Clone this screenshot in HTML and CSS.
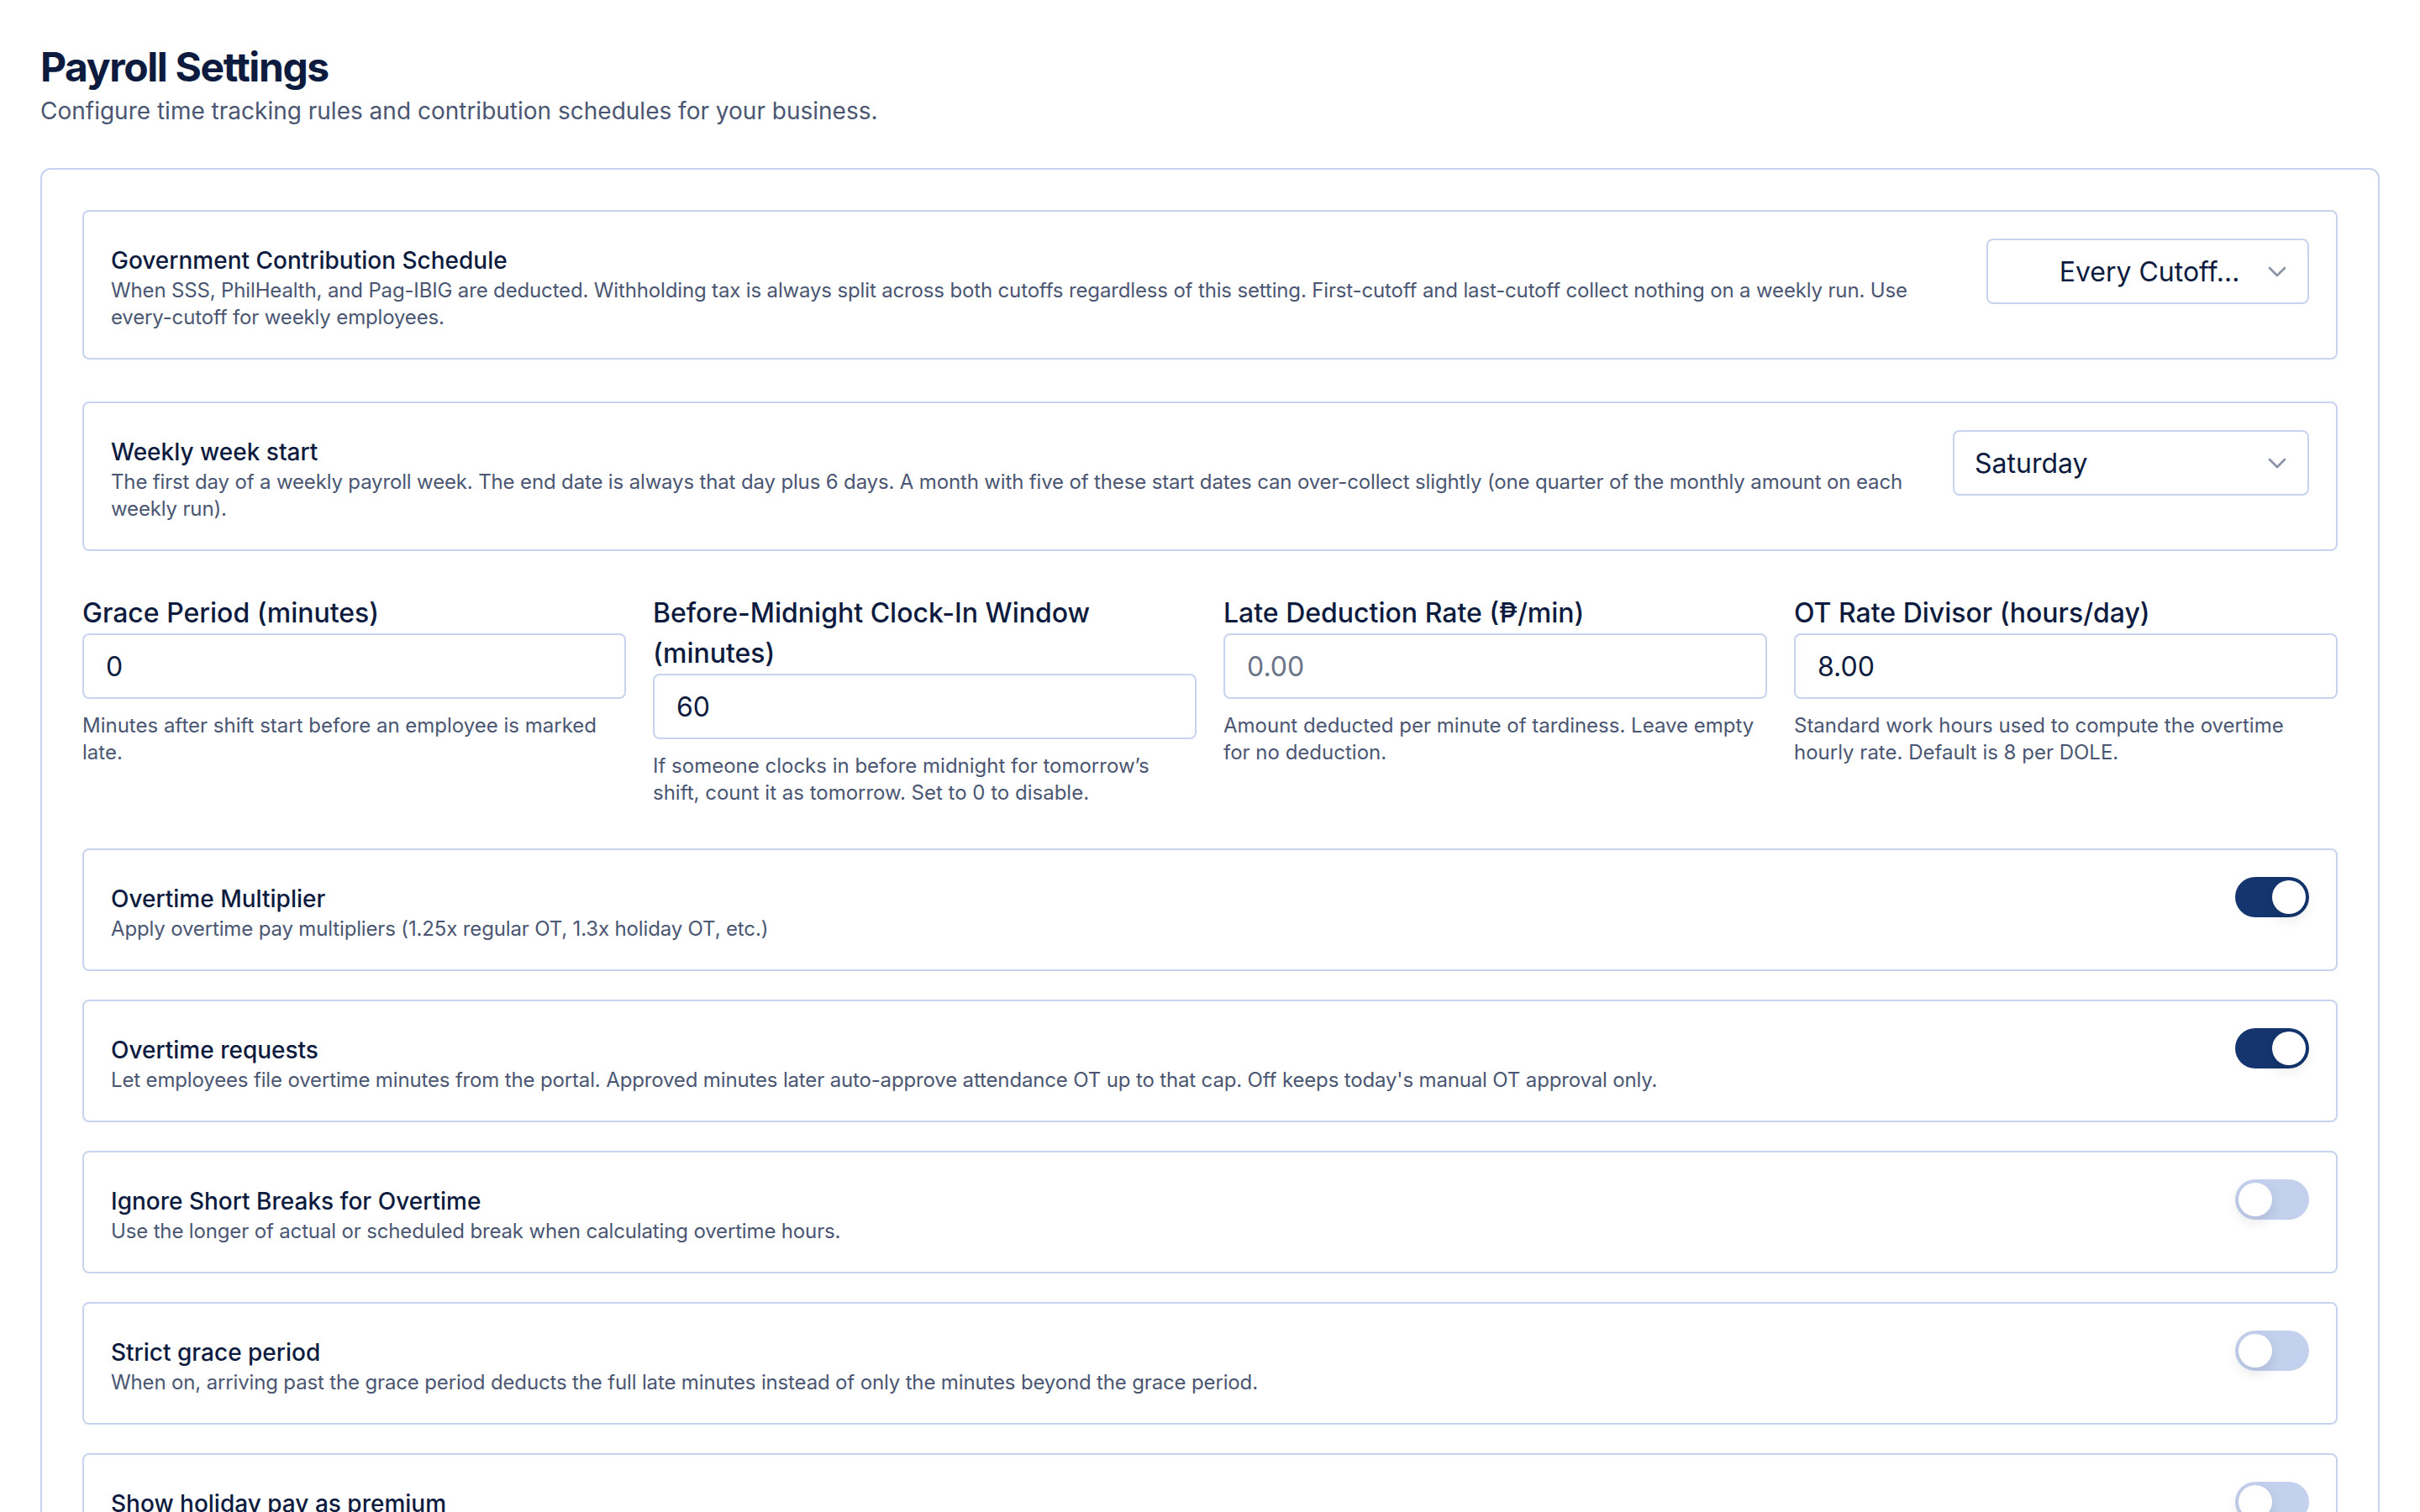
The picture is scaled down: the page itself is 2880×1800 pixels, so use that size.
FILE: index.html
```html
<!DOCTYPE html>
<html lang="en">
<head>
  <meta charset="UTF-8">
  <meta name="viewport" content="width=device-width, initial-scale=1.0">
  <title>Payroll Settings</title>
  <link rel="stylesheet" href="styles.css">
</head>
<body>

  <div class="page">
    <div class="page-head">
      <h1>Payroll Settings</h1>
      <p>Configure time tracking rules and contribution schedules for your business.</p>
    </div>

    <div class="panel">

      <div class="row-card">
        <div class="row-text">
          <h3>Government Contribution Schedule</h3>
          <p>When SSS, PhilHealth, and Pag-IBIG are deducted. Withholding tax is always split across both cutoffs regardless of this setting. First-cutoff and last-cutoff collect nothing on a weekly run. Use every-cutoff for weekly employees.</p>
        </div>
        <div class="select select-cutoff">
          <span class="select-value centered">Every Cutoff…</span>
          <svg class="chevron" viewBox="0 0 16 16" fill="none" stroke="currentColor" stroke-width="1.3" stroke-linecap="round" stroke-linejoin="round"><path d="M3.5 6l4.5 4.5L12.5 6"/></svg>
        </div>
      </div>

      <div class="row-card">
        <div class="row-text">
          <h3>Weekly week start</h3>
          <p>The first day of a weekly payroll week. The end date is always that day plus 6 days. A month with five of these start dates can over-collect slightly (one quarter of the monthly amount on each weekly run).</p>
        </div>
        <div class="select select-day">
          <span class="select-value">Saturday</span>
          <svg class="chevron" viewBox="0 0 16 16" fill="none" stroke="currentColor" stroke-width="1.3" stroke-linecap="round" stroke-linejoin="round"><path d="M3.5 6l4.5 4.5L12.5 6"/></svg>
        </div>
      </div>

      <div class="fields">
        <div class="field">
          <label>Grace Period (minutes)</label>
          <input type="text" value="0">
          <p class="help">Minutes after shift start before an employee is marked late.</p>
        </div>
        <div class="field">
          <label>Before-Midnight Clock-In Window (minutes)</label>
          <input type="text" value="60">
          <p class="help">If someone clocks in before midnight for tomorrow’s shift, count it as tomorrow. Set to 0 to disable.</p>
        </div>
        <div class="field">
          <label>Late Deduction Rate (₱/min)</label>
          <input type="text" placeholder="0.00">
          <p class="help">Amount deducted per minute of tardiness. Leave empty for no deduction.</p>
        </div>
        <div class="field">
          <label>OT Rate Divisor (hours/day)</label>
          <input type="text" value="8.00">
          <p class="help">Standard work hours used to compute the overtime hourly rate. Default is 8 per DOLE.</p>
        </div>
      </div>

      <div class="toggle-list">
        <div class="row-card">
          <div class="row-text">
            <h3>Overtime Multiplier</h3>
            <p>Apply overtime pay multipliers (1.25x regular OT, 1.3x holiday OT, etc.)</p>
          </div>
          <span class="toggle on"><span class="thumb"></span></span>
        </div>

        <div class="row-card">
          <div class="row-text">
            <h3>Overtime requests</h3>
            <p>Let employees file overtime minutes from the portal. Approved minutes later auto-approve attendance OT up to that cap. Off keeps today's manual OT approval only.</p>
          </div>
          <span class="toggle on"><span class="thumb"></span></span>
        </div>

        <div class="row-card">
          <div class="row-text">
            <h3>Ignore Short Breaks for Overtime</h3>
            <p>Use the longer of actual or scheduled break when calculating overtime hours.</p>
          </div>
          <span class="toggle"><span class="thumb"></span></span>
        </div>

        <div class="row-card">
          <div class="row-text">
            <h3>Strict grace period</h3>
            <p>When on, arriving past the grace period deducts the full late minutes instead of only the minutes beyond the grace period.</p>
          </div>
          <span class="toggle"><span class="thumb"></span></span>
        </div>

        <div class="row-card">
          <div class="row-text">
            <h3>Show holiday pay as premium</h3>
            <p>Show only the extra holiday amount on payslips instead of the full holiday day rate.</p>
          </div>
          <span class="toggle"><span class="thumb"></span></span>
        </div>
      </div>

    </div>
  </div>

</body>
</html>
```

FILE: styles.css
```css
* {
  margin: 0;
  padding: 0;
  box-sizing: border-box;
}

body {
  font-family: Inter, "Noto Sans", sans-serif;
  background: #fff;
  color: #0d1b3e;
}

.page {
  padding: 48px;
}

/* header */
.page-head h1 {
  font-size: 48px;
  line-height: 64px;
  font-weight: 700;
  letter-spacing: -1.4px;
  color: #0d1b3e;
}

.page-head p {
  font-size: 28px;
  line-height: 40px;
  color: #4a5672;
}

.panel {
  margin-top: 48px;
  border: 2px solid #c7d4ef;
  border-radius: 12px;
  padding: 48px;
  display: flex;
  flex-direction: column;
  gap: 50px;
}

/* setting rows */
.row-card {
  display: flex;
  align-items: flex-start;
  gap: 32px;
  border: 2px solid #c7d4ef;
  border-radius: 8px;
  padding: 32px;
}

.row-text {
  flex: 1;
  min-width: 0;
  padding-top: 6px;
}

.row-text h3 {
  font-size: 28px;
  line-height: 40px;
  font-weight: 500;
  color: #0d1b3e;
}

.row-text p {
  font-size: 24px;
  line-height: 32px;
  letter-spacing: -0.15px;
  color: #4a5672;
}

/* select look-alike */
.select {
  flex-shrink: 0;
  display: flex;
  align-items: center;
  height: 78px;
  border: 2px solid #c7d4ef;
  border-radius: 8px;
  padding: 0 20px 0 24px;
  font-size: 32px;
  color: #0d1b3e;
  background: #fff;
}

.select-cutoff {
  width: 384px;
}

.select-day {
  width: 424px;
}

.select-value {
  flex: 1;
  white-space: nowrap;
  overflow: hidden;
}

.select-value.centered {
  text-align: center;
  padding-left: 48px;
}

.chevron {
  width: 32px;
  height: 32px;
  margin-left: 16px;
  color: #8a92a5;
}

/* number fields */
.fields {
  display: grid;
  grid-template-columns: repeat(4, 1fr);
  gap: 32px;
}

.field label {
  display: block;
  font-size: 32px;
  line-height: 48px;
  font-weight: 500;
  color: #0d1b3e;
}

.field input {
  display: block;
  width: 100%;
  height: 78px;
  border: 2px solid #c7d4ef;
  border-radius: 8px;
  padding: 0 26px;
  font-family: inherit;
  font-size: 32px;
  color: #0d1b3e;
  outline: none;
}

.field input::placeholder {
  color: #6b7387;
}

.help {
  margin-top: 16px;
  font-size: 24px;
  line-height: 32px;
  color: #4a5672;
}

/* toggles */
.toggle-list {
  display: flex;
  flex-direction: column;
  gap: 34px;
}

.toggle {
  flex-shrink: 0;
  position: relative;
  width: 88px;
  height: 48px;
  border-radius: 24px;
  background: #c4d1ee;
}

.toggle.on {
  background: #14356e;
}

.thumb {
  position: absolute;
  top: 4px;
  left: 4px;
  width: 40px;
  height: 40px;
  border-radius: 50%;
  background: #fff;
  box-shadow: 0 6px 16px rgba(15, 23, 42, 0.12);
}

.toggle.on .thumb {
  left: 44px;
}
```
